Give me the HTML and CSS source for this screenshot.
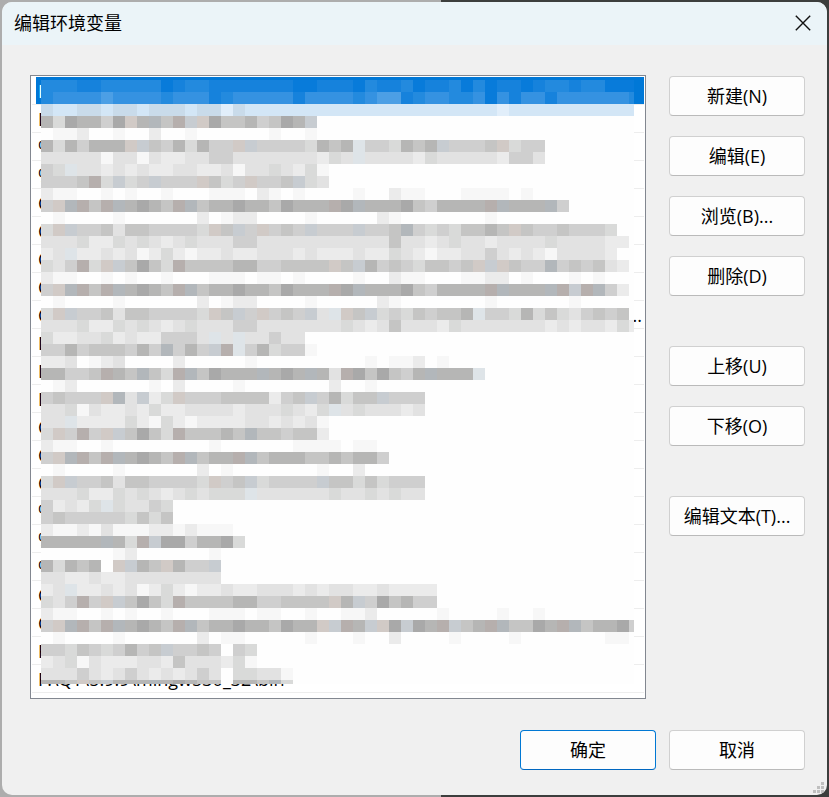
FILE: index.html
```
<!DOCTYPE html>
<html lang="zh-CN">
<head>
    <meta charset="UTF-8">
    <meta name="viewport" content="width=device-width, initial-scale=1.0">
    <title>编辑环境变量</title>
    <link rel="stylesheet" href="styles.css">
</head>
<body>
    <div class="dialog" role="dialog" aria-labelledby="dialog-title">
        <header class="titlebar">
            <h1 id="dialog-title">编辑环境变量</h1>
            <button class="close-button" aria-label="关闭">
                <svg width="16" height="16" viewBox="0 0 16 16"><path d="M.8.8l14.4 14.4M15.2.8L.8 15.2" fill="none" stroke="#111" stroke-width="1.4"/></svg>
            </button>
        </header>
        <div class="content">
            <div class="list-box">
                <ul class="paths" role="listbox" aria-label="路径">
                    <li class="selected"><span>D</span></li>
                    <li><span>D</span></li>
                    <li><span>%</span></li>
                    <li><span>%</span></li>
                    <li><span>C</span></li>
                    <li><span>C</span></li>
                    <li><span>C</span></li>
                    <li><span>C</span></li>
                    <li><span>C</span><span class="more">...</span></li>
                    <li><span>D</span></li>
                    <li><span>D</span></li>
                    <li><span>D</span></li>
                    <li><span>C</span></li>
                    <li><span>C</span></li>
                    <li><span>C</span></li>
                    <li><span>%</span></li>
                    <li><span>%</span></li>
                    <li><span>%</span></li>
                    <li><span>C</span></li>
                    <li><span>C</span></li>
                    <li><span>F</span></li>
                    <li><span>F:\QT\5.9.9\mingw530_32\bin</span></li>
                </ul>
                <svg class="mosaic" id="mosaic" width="593" height="604" aria-hidden="true"></svg>
            </div>
            <div class="actions">
                <div class="group">
                    <button>新建(N)</button>
                    <button>编辑(E)</button>
                    <button>浏览(B)...</button>
                    <button>删除(D)</button>
                </div>
                <div class="group">
                    <button>上移(U)</button>
                    <button>下移(O)</button>
                </div>
                <div class="group">
                    <button>编辑文本(T)...</button>
                </div>
            </div>
        </div>
        <footer class="footer">
            <button class="default">确定</button>
            <button>取消</button>
        </footer>
        <svg class="grip" width="11" height="11" viewBox="0 0 11 11" fill="#bfbfbf">
            <path d="M8 0h3v3H8zM4 4h3v3H4zM8 4h3v3H8zM0 8h3v3H0zM4 8h3v3H4zM8 8h3v3H8z"/>
        </svg>
    </div>
    <script src="mosaic.js"></script>
</body>
</html>
```

FILE: styles.css
```
* {
    box-sizing: border-box;
}
body {
    margin: 0;
    padding: 2px;
    min-height: 100vh;
    display: flex;
    background: linear-gradient(to right, #adadad 441px, #3c3e3d 441px);
    font-family: "Open Sans", "Noto Sans CJK SC", sans-serif;
    font-size: 18px;
    color: #000;
}
.dialog {
    position: relative;
    flex: 1;
    display: flex;
    flex-direction: column;
    background-color: #f0f0f0;
    border-radius: 10px;
    overflow: hidden;
}
.titlebar {
    display: flex;
    justify-content: space-between;
    align-items: center;
    height: 43px;
    padding: 0 16px 2px 12px;
    background-color: #ebf4f8;
}
.titlebar h1 {
    margin: 0;
    font-size: 18px;
    font-weight: normal;
    line-height: 24px;
}
.close-button {
    display: flex;
    padding: 0;
    border: none;
    background: none;
}
.content {
    display: grid;
    grid-template-columns: 1fr 136px;
    gap: 23px;
    padding: 30px 22px 0 28px;
}
.list-box {
    position: relative;
    padding: 1px 1px 5px;
    border: 1px solid #828790;
    background-color: #fff;
}
.paths {
    margin: 0;
    padding: 0;
    list-style: none;
}
.paths li {
    display: flex;
    height: 28px;
    padding-left: 4px;
    border-bottom: 1px solid #ededed;
    line-height: 29px;
    white-space: nowrap;
}
.paths span {
    padding-left: 2px;
}
.paths .more {
    margin-left: auto;
    padding-right: 2px;
}
.paths .selected span {
    flex: 1;
    background-color: #0078d7;
    color: #fff;
}
/* covers the private part of each path */
.mosaic {
    position: absolute;
    left: 10px;
    top: 4px;
}
.actions {
    display: flex;
    flex-direction: column;
    gap: 50px;
    padding-top: 1px;
}
.group {
    display: flex;
    flex-direction: column;
    gap: 20px;
}
.group button,
.footer button {
    width: 136px;
    height: 40px;
    padding: 0;
    border: 1px solid #d0d0d0;
    border-bottom-color: #bababa;
    border-radius: 4px;
    background-color: #fdfdfd;
    color: #000;
    font: inherit;
    line-height: 24px;
}
.footer {
    display: flex;
    justify-content: flex-end;
    gap: 13px;
    padding: 31px 22px 25px;
}
.footer .default {
    border-color: #0078d4;
    border-bottom-color: #0067c0;
}
.grip {
    position: absolute;
    right: 3px;
    bottom: 2px;
}
```

FILE: mosaic.js
```
const CELL = 12;

const COLORS = {
    A: '#087bda', B: '#1682dc', C: '#238ade', D: '#3592e1', E: '#4c9fe5',
    L: '#c9dbea', M: '#d3e6f6', N: '#e1eefa',
    a: '#a9a9a9', b: '#b6b6b5', c: '#c5c5c4', d: '#cfcfcf', e: '#d9dad9',
    f: '#e2e2e2', g: '#ebebeb', h: '#f7f7f7',
    p: '#d1cac6', q: '#c7ccd1', r: '#b6afad', s: '#dee4e8', t: '#b2b7bb'
};

// one letter per cell, a dot leaves the cell blank
const ROWS = [
    'CCCBBCCCCCABCCBBBBBBBAABBBACBBCABBCACABBABCCBCCAAA',
    'CDDDDEDDDDCDDDBCDDDDDBDDDDCDEEBCDDCCDADBDDBDDDDDDC',
    'LMMLLMLLMLLLMLLNLMMMMMMMMMMMMMMMMMMMMMNMMMMMMMMMMM',
    'beabbdapbtcrqpaccbdcabq',
    '.hhg..h..g..h......h..h',
    'bebdbbbpqcdbebddpqddddebcbsddebcbqdddcpedd',
    'fffffhffhfggffddfffffffgefsffffgefffffgddf',
    'desffgfgfggffggfhffefgeh',
    'dddcreqedqdddpcedpddcqef',
    'ghh..h.h..h...hhh.gh.h....h..ghh...hhhh.h',
    'dptrcrtbabcrtcbbabbcabbbratbbbacdbbbbrtbbbtd',
    '.h....h......g.hgg....h.....gh.......h',
    'epqddcfccddddepcqdpdcdqdddqddctdedeccbcpcddcddde',
    'fffeggefefgfefffddfffffffffffcffgfeffgffffeffffgg',
    'gfsggfgfhgeghggfggfffgfgggfggefghggffdfgfghffffg',
    'efdrepqcacerccccbbddccccpcqbdcdeccdcpqpcddtdcdcfg',
    'ghh..h.h..h...hhh.hh.h....h..ghh...hhgg.h...h.h',
    'dptrcrtbabcrtcbbabbcabbbratbbbacdbbbbrtbbbtrqrtdg',
    '.h....h......g.hgg....h.....gh.......h......h',
    'epqddcfccddddepcqdpdcdqfspcqedecdccbsddebecefdcdc',
    'fffeggefefgfefffddfffffffefgfcfffgefffffffgfgffgeg',
    'eggffegfggdddfsfsffdff',
    'ddbdcccdbdtdbdqrsdbeddh',
    'ggf.hgf....g.....h.........h.hhg.h',
    'bbddcrbctcertcabbbtbabtbfracacdbtbbbs',
    '.hg......h.g....h.......g..h',
    'dcdddptfqgepdddccccgdcqdbeccqddd',
    'ffehfggfgeggffffgfffefgesfefffgf',
    'ffsggggegheghggggffgfgfh',
    'epdrdpqcacercccbctccdccg',
    'ghh..h........h......hhhh.hh',
    'dptrcrtbabcrtcbbrtcbbbccbcbbd',
    '.h....h......g.h.......h..g',
    'epqddcfccddddepdcqeddddqcceceddd',
    'fffeggefefgfefeeesffffffeffefeff',
    'dgfgeseffde',
    'dcdddddecec',
    'ghhghfhhhgghghhh',
    'bbbbbtberqaadbbae',
    '......hg......h.',
    'bebcb.pqbcpbddq',
    'ffggfggffffffff',
    'gfsggfgfhgeghggfggfffgfgffggfgggg',
    'efdrdpqcacerccccbbddccccpbqdacbdd',
    'ghh..h.h..h...hhh.hh..h..hhg.....h....h..h',
    'dptrcrtbabcrtcbbabbcabbpqrbqpaqabrqcbrtccabrtcbbad',
    '.h....h......g.hh.....h...h..g....h....h.......hh',
    'ddecdedbdcqddcd.de',
    'gfehfgggffgcfffgeh',
    'fffdfgfdfgfgfdf.eeffh',
    'bbcpcqbbbtbabcc.bbcte'
];

function addRect(svg, x, y, width, height, color) {
    const rect = document.createElementNS('http://www.w3.org/2000/svg', 'rect');
    rect.setAttribute('x', x);
    rect.setAttribute('y', y);
    rect.setAttribute('width', width);
    rect.setAttribute('height', height);
    rect.setAttribute('fill', color);
    svg.appendChild(rect);
}

function drawMosaic() {
    const svg = document.getElementById('mosaic');
    addRect(svg, 0, 0, 593, 604, '#fefefe');
    ROWS.forEach((row, r) => {
        [...row].forEach((letter, c) => {
            if (COLORS[letter]) {
                addRect(svg, c * CELL, r * CELL, CELL, CELL, COLORS[letter]);
            }
        });
    });
}

drawMosaic();
```
